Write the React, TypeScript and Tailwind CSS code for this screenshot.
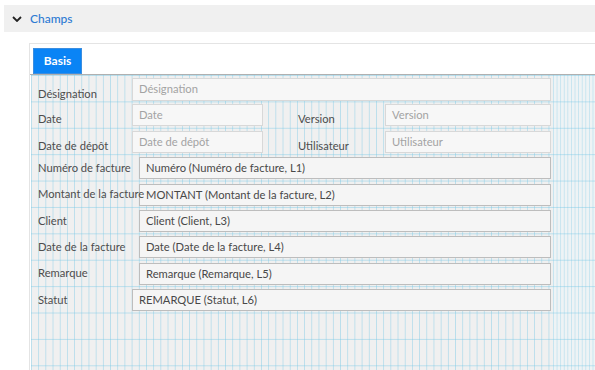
const grid =
  "bg-[#f0f0f0] bg-[linear-gradient(to_right,rgba(120,200,230,0.45)_1px,transparent_1px),linear-gradient(to_bottom,rgba(120,200,230,0.45)_1px,transparent_1px)] bg-[size:7.2px_26.4px]";
const denseGrid =
  "bg-[#eef3f5] bg-[linear-gradient(to_right,rgba(120,200,230,0.35)_1px,transparent_1px),linear-gradient(to_bottom,rgba(120,200,230,0.45)_1px,transparent_1px)] bg-[size:3.6px_26.4px]";

type FieldProps = {
  label: string;
  value: string;
  left?: number;
};

const TopInput = ({ text, width }: { text: string; width: string }) => (
  <div
    className={`${width} h-[22px] border border-[#d8d8d8] bg-[#f7f7f7] pl-[6px] text-[11.2px] leading-[20px] text-[#a3a3a3]`}
  >
    {text}
  </div>
);

const TopLabel = ({ text, className }: { text: string; className: string }) => (
  <div className={`${className} h-[22px] flex items-end text-[11.2px] leading-[14px] text-[#4d4d4d] whitespace-nowrap`}>
    {text}
  </div>
);

// label may run over the left edge of its field, as in the designer
const ValueRow = ({ label, value, left = 108 }: FieldProps) => (
  <div className="h-[26.4px] flex items-start">
    <div
      className="relative z-10 h-[22px] flex items-center pl-[7px] text-[11.2px] text-[#4d4d4d] whitespace-nowrap shrink-0"
      style={{ width: left }}
    >
      {label}
    </div>
    <div className="flex-1 h-[22px] border border-[#bdbdbd] bg-[#f5f5f5] pl-[6px] text-[11.2px] leading-[20px] text-[#484848] whitespace-nowrap">
      {value}
    </div>
  </div>
);

export default function App() {
  return (
    <div className="w-[595px] h-[370px] bg-white overflow-hidden font-['Lato',sans-serif]">
      <div className="ml-[4px] mt-[5px] h-[27px] bg-[#f0f0f0] flex items-center">
        <svg width="10" height="6" viewBox="0 0 10 6" className="ml-[8px]">
          <path d="M1 1 L5 5 L9 1" fill="none" stroke="#222" strokeWidth="1.8" />
        </svg>
        <span className="ml-[8px] text-[12px] font-medium text-[#2d7bd3]">Champs</span>
      </div>

      <div className="ml-[29px] mt-[11px] border-l border-t border-[#e4e4e4] h-[330px]">
        <div className="pt-[4px] pl-[3px] border-b border-[#b0b0b0]">
          <div className="w-[49px] h-[26px] bg-[#0a84f5] border border-[#3b8ee0] flex items-center justify-center text-[12px] font-bold text-white">
            Basis
          </div>
        </div>

        <div className="ml-[1px] flex h-[300px]">
          <div className={`w-[522px] ${grid} pt-[3px] pr-[2px]`}>
            <div className="h-[26.4px] flex">
              <div className="w-[101px] h-[23px] flex items-end pl-[7px] text-[11.2px] leading-[14px] text-[#4d4d4d]">
                Désignation
              </div>
              <div className="flex-1 h-[23px] border border-[#d8d8d8] bg-[#f7f7f7] pl-[6px] text-[11.2px] leading-[20px] text-[#a3a3a3]">
                Désignation
              </div>
            </div>

            <div className="h-[26.4px] flex">
              <TopLabel text="Date" className="w-[101px] pl-[7px]" />
              <TopInput text="Date" width="w-[131px]" />
              <TopLabel text="Version" className="w-[122px] pl-[35px]" />
              <TopInput text="Version" width="flex-1" />
            </div>

            <div className="h-[26.4px] flex">
              <TopLabel text="Date de dépôt" className="w-[101px] pl-[7px]" />
              <TopInput text="Date de dépôt" width="w-[131px]" />
              <TopLabel text="Utilisateur" className="w-[122px] pl-[35px]" />
              <TopInput text="Utilisateur" width="flex-1" />
            </div>

            <ValueRow label="Numéro de facture" value="Numéro (Numéro de facture, L1)" />
            <ValueRow label="Montant de la facture" value="MONTANT (Montant de la facture, L2)" />
            <ValueRow label="Client" value="Client (Client, L3)" />
            <ValueRow label="Date de la facture" value="Date (Date de la facture, L4)" />
            <ValueRow label="Remarque" value="Remarque (Remarque, L5)" />
            <ValueRow label="Statut" value="REMARQUE (Statut, L6)" left={101} />
          </div>
          <div className={`flex-1 ${denseGrid}`} />
        </div>
      </div>
    </div>
  );
}
